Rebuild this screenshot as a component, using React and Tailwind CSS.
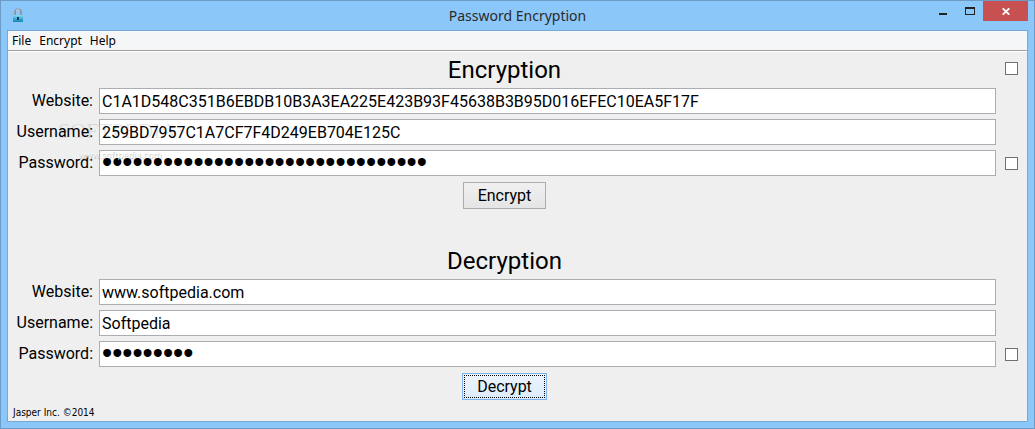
import React, { useState } from 'react';

const menus = ['File', 'Encrypt', 'Help'];

const LockIcon = () => (
  <svg width="12" height="14" viewBox="0 0 12 14" aria-hidden="true">
    <defs>
      <linearGradient id="lockBody" x1="0" y1="0" x2="0" y2="1">
        <stop offset="0" stopColor="#8fdcf2" />
        <stop offset="0.45" stopColor="#45b4d6" />
        <stop offset="1" stopColor="#1583b4" />
      </linearGradient>
    </defs>
    <path d="M3 8V4.5a3 3 0 0 1 6 0V8" fill="none" stroke="#8f98a8" strokeWidth="2" />
    <path d="M4 3.2a2.4 2.4 0 0 1 3.4-0.9" fill="none" stroke="#e3e6ec" strokeWidth="1" />
    <rect x="1" y="7" width="10" height="7" fill="url(#lockBody)" />
    <rect x="5" y="9" width="2" height="3" fill="#1d3f52" />
  </svg>
);

const TitleBar = () => (
  <header className="grid grid-cols-[1fr_auto_1fr] h-[29px] text-[#2a2a2a]">
    <div className="pl-[5px] pt-[7px]">
      <LockIcon />
    </div>
    <h1 className="text-[14px] leading-[30px]">Password Encryption</h1>
    <div className="flex justify-end items-start">
      <button aria-label="Minimize" className="w-[26px] h-5 flex items-center justify-center">
        <svg width="10" height="10" viewBox="0 0 10 10">
          <rect x="1" y="7" width="8" height="2" fill="#222" />
        </svg>
      </button>
      <button aria-label="Maximize" className="w-[27px] h-5 flex items-center justify-center">
        <svg width="10" height="8" viewBox="0 0 10 8">
          <path d="M0 0h10v8H0zM1 2v5h8V2z" fill="#222" fillRule="evenodd" />
        </svg>
      </button>
      <button aria-label="Close" className="w-[45px] h-5 bg-[#c75050] flex items-center justify-center">
        <svg width="8" height="7" viewBox="0 0 8 7">
          <path d="M0.7 0.3L7.3 6.7M7.3 0.3L0.7 6.7" stroke="#fff" strokeWidth="1.8" />
        </svg>
      </button>
    </div>
  </header>
);

const CheckBox = ({ label }) => (
  <input
    type="checkbox"
    aria-label={label}
    className="appearance-none block justify-self-end size-[13px] border border-[#707070] bg-white checked:bg-[#3c7fb1]"
  />
);

const Field = ({ id, label, type = 'text', value, children }) => {
  const [text, setText] = useState(value);

  return (
    <div className="grid grid-cols-[86px_1fr_22px] items-center">
      <label htmlFor={id} className="pr-[6px] text-right text-[16px] leading-[26px] whitespace-nowrap">
        {label}
      </label>
      <input
        id={id}
        type={type}
        value={text}
        onChange={(e) => setText(e.target.value)}
        className={
          type === 'password'
            ? "w-full h-[26px] px-[2px] border border-[#abadb3] bg-white outline-none text-[29px] font-['Liberation_Sans']"
            : 'w-full h-[26px] px-[2px] border border-[#abadb3] bg-white outline-none text-[16px]'
        }
      />
      {children}
    </div>
  );
};

const Panel = ({ title, prefix, website, username, password, topCheck, children }) => (
  <form onSubmit={(e) => e.preventDefault()}>
    <div className="grid grid-cols-[1fr_22px] items-center h-9">
      <h2 className="text-center text-[24px] leading-9">{title}</h2>
      {topCheck && (
        <div className="justify-self-end pb-1">
          <CheckBox label="Keep on top" />
        </div>
      )}
    </div>
    <div className="flex flex-col gap-[5px]">
      <Field id={`${prefix}-website`} label="Website:" value={website} />
      <Field id={`${prefix}-username`} label="Username:" value={username} />
      <Field id={`${prefix}-password`} label="Password:" type="password" value={password}>
        <CheckBox label="Show password" />
      </Field>
    </div>
    <div className="pt-[6px] pr-[22px] flex justify-center">{children}</div>
  </form>
);

const App = () => {
  return (
    <div className="min-h-screen flex flex-col px-[6px] pb-[6px] border border-[#6c9bc7] bg-[#8cc7fa] text-black font-['Noto_Sans',sans-serif]">
      <TitleBar />

      <div className="relative flex-1 flex flex-col border border-[#76a8d3] bg-[#efefef]">
        <nav className="flex gap-2 h-5 px-1 bg-[#f5f6f7] border-b border-[#a0a0a0] text-[12px] leading-5">
          {menus.map((menu) => (
            <button key={menu}>{menu}</button>
          ))}
        </nav>

        <main className="flex-1 pl-[5px] pr-[9px] border-t border-white font-['Roboto',sans-serif]">
          <Panel
            title="Encryption"
            prefix="enc"
            website="C1A1D548C351B6EBDB10B3A3EA225E423B93F45638B3B95D016EFEC10EA5F17F"
            username="259BD7957C1A7CF7F4D249EB704E125C"
            password="7F3A9C20D15B48E6A0C4F19E2B8D7635"
            topCheck
          >
            <button className="h-[27px] px-[14px] border border-[#acacac] bg-linear-to-b from-[#f0f0f0] to-[#e5e5e5] text-[16px] leading-[25px]">
              Encrypt
            </button>
          </Panel>

          <div className="pt-[34px]">
            <Panel
              title="Decryption"
              prefix="dec"
              website="www.softpedia.com"
              username="Softpedia"
              password="softpedia"
            >
              <button className="h-[27px] p-px border border-[#7eb4ea] bg-linear-to-b from-[#ecf4fc] to-[#dcecfc] text-[16px]">
                <span className="block px-3 border border-dotted border-black leading-[21px]">Decrypt</span>
              </button>
            </Panel>
          </div>
        </main>

        <footer className="px-[5px] text-[10px] leading-4 font-['DejaVu_Sans_Condensed','DejaVu_Sans',sans-serif]">
          Jasper Inc. ©2014
        </footer>

        {/* Watermark over the form */}
        <div className="absolute left-[50px] top-[90px] pointer-events-none leading-5">
          <div className="text-[22px] text-black/10 font-['Liberation_Serif']">
            SOFTPEDIA<sup className="text-[8px]">™</sup>
          </div>
          <div className="pl-5 pt-1 text-[9px] text-white/80 [text-shadow:1px_1px_1px_rgba(0,0,0,0.25)]">
            www.softpedia.com
          </div>
        </div>
      </div>
    </div>
  );
};

export default App;
